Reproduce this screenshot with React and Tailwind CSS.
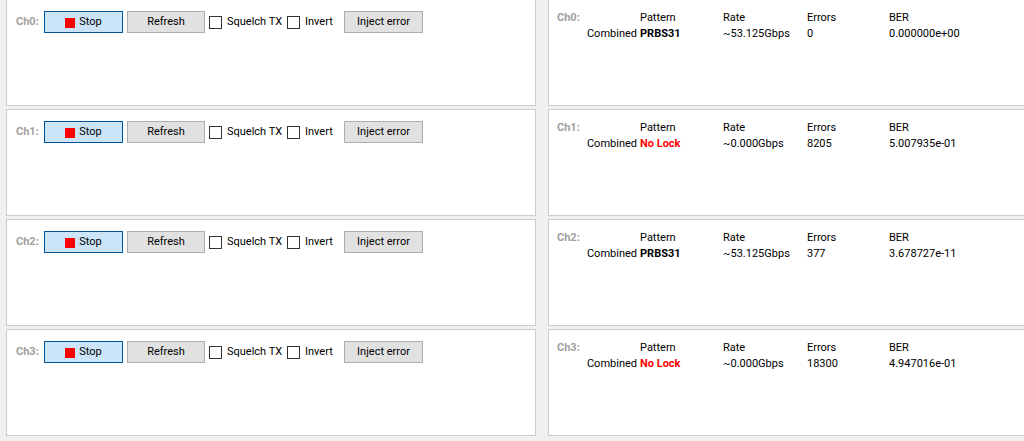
import React from 'react';

const channels = [
    { id: 'Ch0', pattern: 'PRBS31', lock: true, rate: '~53.125Gbps', errors: '0', ber: '0.000000e+00' },
    { id: 'Ch1', pattern: 'No Lock', lock: false, rate: '~0.000Gbps', errors: '8205', ber: '5.007935e-01' },
    { id: 'Ch2', pattern: 'PRBS31', lock: true, rate: '~53.125Gbps', errors: '377', ber: '3.678727e-11' },
    { id: 'Ch3', pattern: 'No Lock', lock: false, rate: '~0.000Gbps', errors: '18300', ber: '4.947016e-01' },
];

const CheckBox = ({ label, className }) => (
    <label className={`flex items-center shrink-0 ${className}`}>
        <span className="w-[13px] h-[13px] border border-[#333333] bg-white" />
        <span className="ml-[5px]">{label}</span>
    </label>
);

const ControlPanel = ({ ch }) => (
    <div className="w-[530px] h-[107px] ml-[6px] bg-white border border-[#cccccc] pt-[11px] pl-[9px] shrink-0">
        <div className="flex items-center h-[22px]">
            <span className="w-[24px] font-bold text-[#a0a0a0]">{ch.id}:</span>
            <button className="ml-[4px] w-[79px] h-[22px] pt-px border border-[#005499] bg-[#cce4f7] flex items-center justify-center">
                <span className="w-[10px] h-[10px] bg-[#ff0000] mr-[4px]" />
                <span>Stop</span>
            </button>
            <button className="ml-[4px] w-[78px] h-[22px] pt-px border border-[#adadad] bg-[#e1e1e1]">Refresh</button>
            <CheckBox label="Squelch TX" className="ml-[4px] w-[78px]" />
            <CheckBox label="Invert" className="w-[57px]" />
            <button className="w-[79px] h-[22px] pt-px border border-[#adadad] bg-[#e1e1e1]">Inject error</button>
        </div>
    </div>
);

const StatusPanel = ({ ch }) => (
    <div className="w-[490px] h-[107px] ml-[12px] bg-white border border-[#cccccc] pt-[10px] pl-[8px] shrink-0">
        <div className="grid grid-cols-[83px_83px_84px_82px_auto] leading-[16px]">
            <span className="font-bold text-[#a0a0a0]">{ch.id}:</span>
            <span>Pattern</span>
            <span>Rate</span>
            <span>Errors</span>
            <span>BER</span>
            <span className="text-right pr-[3px]">Combined</span>
            <span className={ch.lock ? 'font-bold' : 'font-bold text-[#ff0000]'}>{ch.pattern}</span>
            <span>{ch.rate}</span>
            <span>{ch.errors}</span>
            <span>{ch.ber}</span>
        </div>
    </div>
);

const App = () => {
    return (
        <div className="w-[1024px] h-[441px] overflow-hidden bg-[#f0f0f0] text-[11px] text-black" style={{ fontFamily: 'Roboto, sans-serif' }}>
            <div className="-mt-px flex flex-col gap-[3px]">
                {channels.map((ch) => (
                    <div key={ch.id} className="flex">
                        <ControlPanel ch={ch} />
                        <StatusPanel ch={ch} />
                    </div>
                ))}
            </div>
        </div>
    );
};

export default App;
